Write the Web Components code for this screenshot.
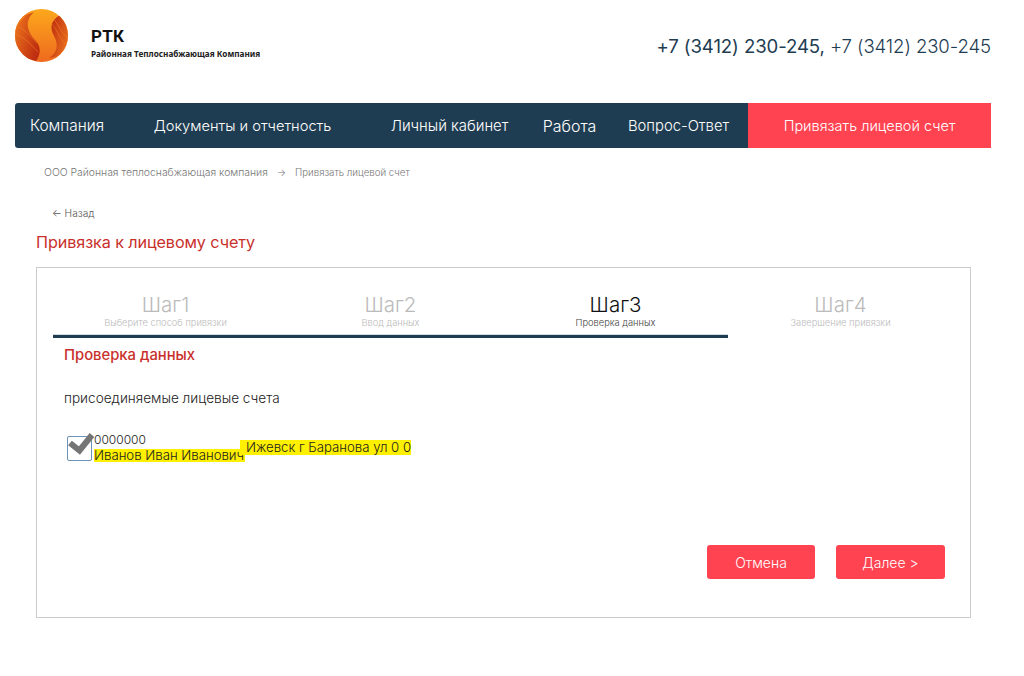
<!DOCTYPE html>
<html lang="ru">
<head>
<meta charset="utf-8">
<title>Привязка к лицевому счету</title>
<style>
html, body { margin: 0; background: #fff; }
body { font-family: "Inter", "Liberation Sans", sans-serif; color: #222; }
</style>
</head>
<body>
<rtk-page>
  <rtk-header slot="header"></rtk-header>
  <rtk-nav slot="nav"></rtk-nav>
  <rtk-crumbs slot="crumbs"></rtk-crumbs>
  <rtk-wizard>
    <rtk-step title-text="Шаг1" hint="Выберите способ привязки"></rtk-step>
    <rtk-step title-text="Шаг2" hint="Ввод данных"></rtk-step>
    <rtk-step title-text="Шаг3" hint="Проверка данных" active></rtk-step>
    <rtk-step title-text="Шаг4" hint="Завершение привязки"></rtk-step>
  </rtk-wizard>
</rtk-page>
<script>
/* Page frame */
class RtkPage extends HTMLElement {
    constructor() {
        super()
        this.attachShadow({ mode: 'open' })
        this.shadowRoot.innerHTML = `
        <style>
        :host { display: block; width: 1024px; height: 676px; overflow: hidden; }
        .back { padding: 28px 0 0 52px; font-size: 10.2px; line-height: 12px; color: #555; font-weight: 300; }
        h1 { margin: 13px 0 0 36px; font-size: 16.2px; line-height: 20px; font-weight: 400; color: #c9302c; letter-spacing: -0.1px; }
        </style>
        <slot name="header"></slot>
        <slot name="nav"></slot>
        <slot name="crumbs"></slot>
        <div class="back">← Назад</div>
        <h1>Привязка к лицевому счету</h1>
        <slot></slot>
        `
    }
}
customElements.define('rtk-page', RtkPage)

/* Logo and phones */
class RtkHeader extends HTMLElement {
    constructor() {
        super()
        this.attachShadow({ mode: 'open' })
        this.shadowRoot.innerHTML = `
        <style>
        :host { display: flex; align-items: flex-start; justify-content: space-between; box-sizing: border-box; width: 976px; height: 103px; margin-left: 15px; padding-top: 9px; }
        .brand { display: flex; }
        svg { width: 53px; height: 53px; display: block; }
        .names { margin: 17px 0 0 23px; }
        .rtk { font-family: "Roboto", sans-serif; font-size: 17px; line-height: 20px; font-weight: 700; color: #111; letter-spacing: 0.3px; }
        .full { font-family: "Noto Sans", sans-serif; font-size: 8.2px; line-height: 10px; margin-top: 3px; font-weight: 700; color: #222; white-space: nowrap; }
        .phones { margin-top: 25px; font-size: 18.6px; line-height: 24px; color: #1f3d52; font-weight: 300; white-space: nowrap; letter-spacing: -0.1px; }
        .phones b { font-weight: 400; }
        </style>
        <div class="brand">
            <svg viewBox="0 0 53 53">
                <defs>
                    <linearGradient id="o" x1="0" y1="0" x2="0" y2="1">
                        <stop offset="0" stop-color="#fca81c"/>
                        <stop offset="1" stop-color="#ef6a1e"/>
                    </linearGradient>
                    <linearGradient id="r1" x1="0" y1="0" x2="1" y2="0.6">
                        <stop offset="0" stop-color="#f07a1e"/>
                        <stop offset="1" stop-color="#bf2e10"/>
                    </linearGradient>
                    <linearGradient id="r2" x1="1" y1="1" x2="0" y2="0.4">
                        <stop offset="0" stop-color="#f07a1e"/>
                        <stop offset="1" stop-color="#bf2e10"/>
                    </linearGradient>
                    <clipPath id="c"><circle cx="26.5" cy="26.5" r="26.5"/></clipPath>
                </defs>
                <g clip-path="url(#c)">
                    <rect width="53" height="53" fill="url(#o)"/>
                    <path d="M19 3C9 12 12 23 21 32c5 6 5 13 0 20L0 46V10Z" fill="url(#r1)"/>
                    <path d="M0 17c7 1 14 8 22 17M0 25c7 2 14 8 23 18" fill="none" stroke="#f58a2a" stroke-width="1" opacity=".5"/>
                    <path d="M0 0h19C9 7 3 14 0 24Z" fill="#f37c1d"/>
                    <path d="M45 6C35 12 35 19 39 27c5 9 3 17-5 22l19-3V10Z" fill="url(#r2)"/>
                    <path d="M53 36c-7-1-10-15-17-22M53 28c-6-1-9-13-16-20" fill="none" stroke="#f58a2a" stroke-width="1" opacity=".5"/>
                    <path d="M53 53H33c9-4 16-10 20-20Z" fill="#f37c1d"/>
                </g>
            </svg>
            <div class="names">
                <div class="rtk">РТК</div>
                <div class="full">Районная Теплоснабжающая Компания</div>
            </div>
        </div>
        <div class="phones"><b>+7 (3412) 230-245,</b> +7 (3412) 230-245</div>
        `
    }
}
customElements.define('rtk-header', RtkHeader)

/* Main menu */
class RtkNav extends HTMLElement {
    constructor() {
        super()
        this.attachShadow({ mode: 'open' })
        const items = [
            ['Компания', 74, 15, 15.4],
            ['Документы и отчетность', 177, 50, 14.7],
            ['Личный кабинет', 117, 60, 14.9],
            ['Работа', 53, 35, 16],
            ['Вопрос-Ответ', 101, 32, 14.8],
        ]
        this.shadowRoot.innerHTML = `
        <style>
        :host { display: flex; align-items: stretch; box-sizing: border-box; width: 976px; height: 45px; margin-left: 15px; background: #1f3d52; border-radius: 3px 0 0 3px; color: #fff; font-weight: 300; }
        a { display: flex; align-items: center; justify-content: center; white-space: nowrap; }
        .cta { margin-left: auto; width: 243px; background: #ff4351; font-size: 14.5px; }
        </style>
        ${items.map(([text, w, gap, size]) => `<a style="width:${w}px;margin-left:${gap}px;font-size:${size}px">${text}</a>`).join('')}
        <a class="cta">Привязать лицевой счет</a>
        `
    }
}
customElements.define('rtk-nav', RtkNav)

/* Breadcrumbs */
class RtkCrumbs extends HTMLElement {
    constructor() {
        super()
        this.attachShadow({ mode: 'open' })
        this.shadowRoot.innerHTML = `
        <style>
        :host { display: flex; gap: 9px; padding: 19px 0 0 44px; font-size: 9.7px; line-height: 12px; color: #777; font-weight: 300; white-space: nowrap; }
        .first { font-size: 10.4px; }
        </style>
        <span class="first">ООО Районная теплоснабжающая компания</span><span>→</span><span>Привязать лицевой счет</span>
        `
    }
}
customElements.define('rtk-crumbs', RtkCrumbs)

/* One step of the wizard */
class RtkStep extends HTMLElement {
    constructor() {
        super()
        this.attachShadow({ mode: 'open' })
        this.shadowRoot.innerHTML = `
        <style>
        :host { display: block; text-align: center; color: #bbb; font-weight: 300; }
        :host([active]) { color: #111; }
        .t { font-size: 20.5px; line-height: 24px; }
        .h { font-size: 9.3px; line-height: 11px; margin-top: 0; }
        :host([active]) .h { color: #444; }
        </style>
        <div class="t">${this.getAttribute('title-text')}</div>
        <div class="h">${this.getAttribute('hint')}</div>
        `
    }
}
customElements.define('rtk-step', RtkStep)

/* Red button */
class RtkBtn extends HTMLElement {
    constructor() {
        super()
        this.attachShadow({ mode: 'open' })
        this.shadowRoot.innerHTML = `
        <style>
        :host { display: flex; align-items: center; justify-content: center; height: 34px; background: #ff4351; border-radius: 3px; color: #fff; font-size: 14px; font-weight: 300; }
        </style>
        <slot></slot>
        `
    }
}
customElements.define('rtk-btn', RtkBtn)

/* Account row: checkbox, number, name, address */
class RtkAccount extends HTMLElement {
    constructor() {
        super()
        this.attachShadow({ mode: 'open' })
        this.shadowRoot.innerHTML = `
        <style>
        :host { display: flex; align-items: center; margin-left: 3px; font-size: 13.2px; line-height: 15px; color: #222; font-weight: 300; white-space: nowrap; }
        .box { position: relative; box-sizing: border-box; width: 25px; height: 25px; margin-top: 2px; margin-right: 2px; border: 1.5px solid #6b93b8; border-radius: 2px; background: #fff; }
        svg { position: absolute; left: -1.5px; top: -1.5px; width: 25px; height: 25px; overflow: visible; }
        .num { font-size: 12px; line-height: 16px; }
        mark { background: #fff000; color: inherit; }
        .name mark { display: inline-block; width: 151px; height: 13px; line-height: 13px; }
        .addr { margin-left: -5px; margin-bottom: 1px; }
        .addr mark { display: inline-block; width: 165px; padding-left: 6px; height: 15px; line-height: 15px; }
        </style>
        <div class="box">
            <svg viewBox="0 0 25 25"><path d="M3 7 L12.5 14.5 L25 -1" fill="none" stroke="#757575" stroke-width="6" stroke-linejoin="miter"/></svg>
        </div>
        <div>
            <div class="num">0000000</div>
            <div class="name"><mark>Иванов Иван Иванович</mark></div>
        </div>
        <div class="addr"><mark>Ижевск г Баранова ул 0 0</mark></div>
        `
    }
}
customElements.define('rtk-account', RtkAccount)

/* Bordered wizard panel */
class RtkWizard extends HTMLElement {
    constructor() {
        super()
        this.attachShadow({ mode: 'open' })
        this.shadowRoot.innerHTML = `
        <style>
        :host { display: flex; flex-direction: column; box-sizing: border-box; width: 935px; height: 351px; margin: 15px 0 0 36px; padding: 25px 16px 38px; border: 1px solid #ccc; }
        .steps { display: grid; grid-template-columns: repeat(4, 225px); height: 42px; }
        .line { width: 675px; height: 3px; background: #1f3d52; box-shadow: 0 -1px 0 #d5dade; }
        .body { padding: 0 0 0 11px; }
        h2 { margin: 7px 0 0; font-size: 14.8px; line-height: 20px; font-weight: 500; color: #c9302c; }
        p { margin: 25px 0 0; font-size: 13.6px; line-height: 16px; font-weight: 300; color: #222; }
        .acc { margin-top: 26px; }
        .actions { margin-top: auto; margin-right: 9px; display: flex; justify-content: flex-end; gap: 21px; }
        .actions rtk-btn:first-child { width: 108px; }
        .actions rtk-btn:last-child { width: 109px; }
        </style>
        <div class="steps"><slot></slot></div>
        <div class="line"></div>
        <div class="body">
            <h2>Проверка данных</h2>
            <p>присоединяемые лицевые счета</p>
            <div class="acc"><rtk-account></rtk-account></div>
        </div>
        <div class="actions"><rtk-btn>Отмена</rtk-btn><rtk-btn>Далее &gt;</rtk-btn></div>
        `
    }
}
customElements.define('rtk-wizard', RtkWizard)
</script>
</body>
</html>
